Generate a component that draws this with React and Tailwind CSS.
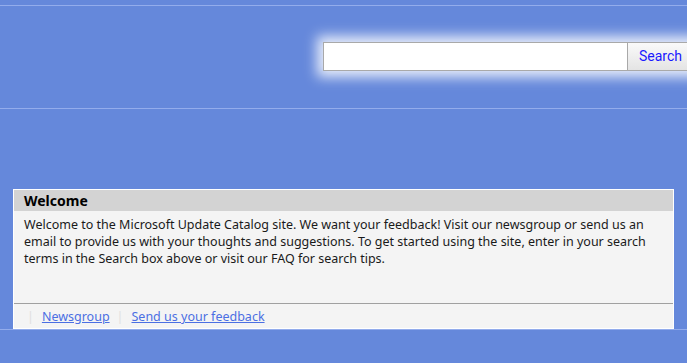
export default function App() {
  return (
    <div className="w-[687px] h-[363px] overflow-hidden bg-[#6588db] font-['Noto_Sans',sans-serif]">
      <div className="h-[5px]" />
      <div className="h-px bg-[#93acec]" />
      <div className="h-[102px] pt-[36px]">
        <div className="flex ml-[323px] w-[400px] shadow-[0_0_12px_6px_rgba(255,255,255,0.85)]">
          <input className="w-[305px] h-[29px] bg-white border border-[#a9a9a9] outline-none" />
          <button className="w-[80px] h-[29px] border border-l-0 border-[#a9a9a9] bg-gradient-to-b from-[#fafafa] to-[#e4e4e4] text-[#1a1aff] text-[14px] text-left pl-[11px] font-['Roboto',sans-serif]">
            Search
          </button>
        </div>
      </div>
      <div className="h-px bg-[#93acec]" />
      <div className="h-[80px]" />
      <div className="ml-[13px] w-[661px] border border-white bg-[#f4f4f4]">
        <div className="h-[21px] bg-[#d3d3d3] pl-[10px] text-[14px] leading-[21px] font-bold text-black">Welcome</div>
        <div className="h-[92px] pl-[10px] pr-[20px] pt-[5px] text-[12.5px] leading-[17px] text-[#1a1a1a]">
          Welcome to the Microsoft Update Catalog site. We want your feedback! Visit our newsgroup or send us an email to provide us with your thoughts and suggestions. To get started using the site, enter in your search terms in the Search box above or visit our FAQ for search tips.
        </div>
        <div className="h-px bg-[#a0a0a0]" />
        <div className="h-[24px] flex items-center pt-[3px] text-[12.5px] pl-[13px]">
          <span className="text-[#e0e0e0] mr-[8px]">|</span>
          <a href="#" className="text-[#4b6fe3] underline">Newsgroup</a>
          <span className="text-[#e0e0e0] ml-[7px] mr-[8px]">|</span>
          <a href="#" className="text-[#4b6fe3] underline">Send us your feedback</a>
        </div>
      </div>
      <div className="h-px bg-[#93acec]" />
    </div>
  );
}
